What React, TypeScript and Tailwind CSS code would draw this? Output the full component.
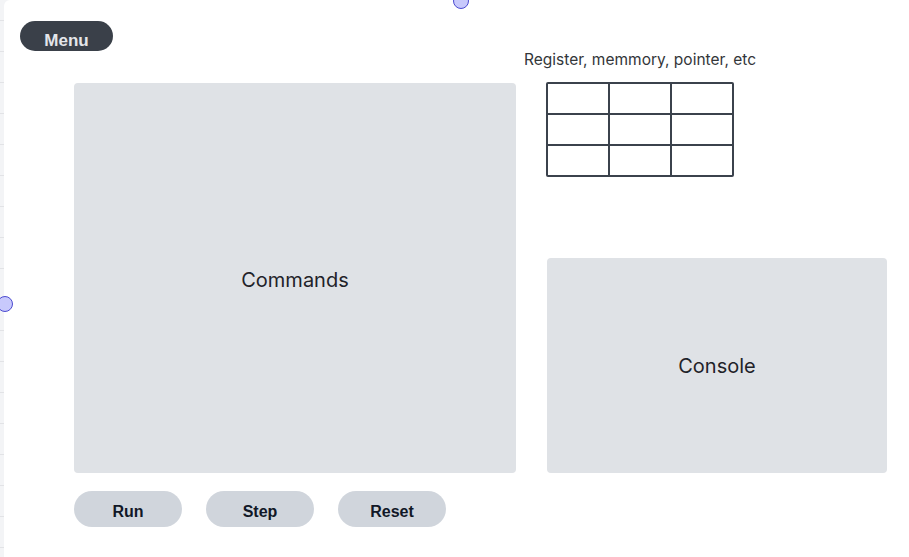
const btn = "h-[36px] w-[108px] rounded-full bg-[#d0d5dc] pt-[13px] text-center text-[16px] leading-4 font-bold text-[#111827]"

function Handle({ className }: { className: string }) {
  return (
    <div
      className={
        "absolute h-[16px] w-[16px] rounded-full border-[1.5px] border-[#4c4bd0] bg-[#c8c9fc] " + className
      }
    />
  )
}

export default function App() {
  const rows = Array.from({ length: 18 })

  return (
    <div className="flex h-[557px] w-[909px] overflow-hidden bg-[#f3f4f6]">
      {/* ruler strip on the left */}
      <div className="flex w-[4px] flex-col">
        <div className="h-[21px] shrink-0 border-b border-[#e2e3e6]" />
        {rows.map((_, i) => (
          <div key={i} className="h-[31px] shrink-0 border-b border-[#e2e3e6]" />
        ))}
      </div>

      {/* canvas */}
      <div className="relative flex-1 rounded-tl-[6px] bg-white font-['Inter',sans-serif]">
        <Handle className="left-[449px] top-[-7px]" />
        <Handle className="left-[-7px] top-[296px]" />

        <div className="pl-[16px] pt-[21px]">
          <div className="h-[30px] w-[93px] rounded-full bg-[#3a4049] pt-[11px] text-center font-['Liberation_Sans',sans-serif] text-[17px] leading-[17px] font-bold text-[#e4e6ea]">
            Menu
          </div>
        </div>

        <div className="flex pl-[70px]">
          {/* left column */}
          <div className="flex flex-col pt-[32px]">
            <div className="flex h-[390px] w-[442px] items-center justify-center rounded-[4px] bg-[#dfe2e6] pt-[4px] text-[20px] text-[#1f2329]">
              Commands
            </div>
            <div className="mt-[18px] flex gap-6 font-['Liberation_Sans',sans-serif]">
              <div className={btn}>Run</div>
              <div className={btn}>Step</div>
              <div className={btn}>Reset</div>
            </div>
          </div>

          {/* right column */}
          <div className="flex flex-col">
            <div className="ml-[8px] text-[15.5px] leading-[18px] text-[#333639]">
              Register, memmory, pointer, etc
            </div>
            <div className="mt-[13px] ml-[30px] grid w-[188px] grid-cols-3 gap-[2px] rounded-[2px] bg-[#3b424c] p-[2px]">
              {Array.from({ length: 9 }).map((_, i) => (
                <div key={i} className="h-[29px] bg-white" />
              ))}
            </div>
            <div className="mt-[81px] ml-[31px] flex h-[215px] w-[340px] items-center justify-center rounded-[4px] bg-[#dfe2e6] text-[20px] text-[#1f2329]">
              Console
            </div>
          </div>
        </div>
      </div>
    </div>
  )
}
